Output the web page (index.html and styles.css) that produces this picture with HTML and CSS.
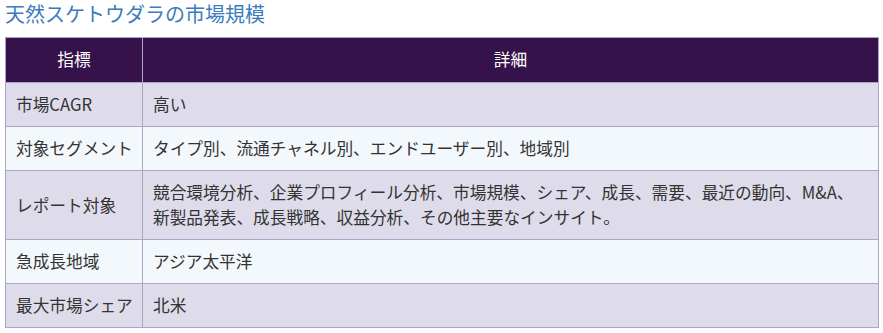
FILE: index.html
```html
<!DOCTYPE html>
<html lang="ja">
<head>
<meta charset="utf-8">
<link rel="stylesheet" href="styles.css">
</head>
<body>
<div class="wrap">
  <h2 class="title">天然スケトウダラの市場規模</h2>
  <table class="mtable">
    <thead>
      <tr><th class="c1">指標</th><th>詳細</th></tr>
    </thead>
    <tbody>
      <tr class="odd"><td>市場CAGR</td><td>高い</td></tr>
      <tr class="even"><td>対象セグメント</td><td>タイプ別、流通チャネル別、エンドユーザー別、地域別</td></tr>
      <tr class="odd"><td>レポート対象</td><td>競合環境分析、企業プロフィール分析、市場規模、シェア、成長、需要、最近の動向、M&amp;A、新製品発表、成長戦略、収益分析、その他主要なインサイト。</td></tr>
      <tr class="even"><td>急成長地域</td><td>アジア太平洋</td></tr>
      <tr class="odd"><td>最大市場シェア</td><td>北米</td></tr>
    </tbody>
  </table>
</div>
</body>
</html>
```
FILE: styles.css
```css
html, body {
  margin: 0;
  padding: 0;
  background: #ffffff;
}
.wrap {
  padding: 0 4px 0 5px;
  font-family: "Noto Sans CJK JP", "Noto Sans", sans-serif;
}
.title {
  margin: 0;
  padding-top: 1px;
  height: 36px;
  font-size: 20px;
  line-height: 26px;
  font-weight: normal;
  color: #3a7cbd;
}
.mtable {
  width: 874px;
  table-layout: fixed;
  border-collapse: collapse;
  border: 1px solid #aaa6c4;
  font-size: 16.7px;
  color: #333333;
}
.mtable th,
.mtable td {
  border: 1px solid #aaa6c4;
  padding: 9px 10px;
  line-height: 25px;
  text-align: left;
  vertical-align: middle;
}
.mtable td:first-child {
  white-space: nowrap;
  padding-right: 2px;
}
.mtable th {
  background: #36124a;
  color: #ffffff;
  font-weight: normal;
  text-align: center;
  padding: 9px 10px 10px;
}
.mtable .c1 {
  width: 116px;
}
.odd td {
  background: #dedcea;
}
.even td {
  background: #f3f8fc;
}
```
